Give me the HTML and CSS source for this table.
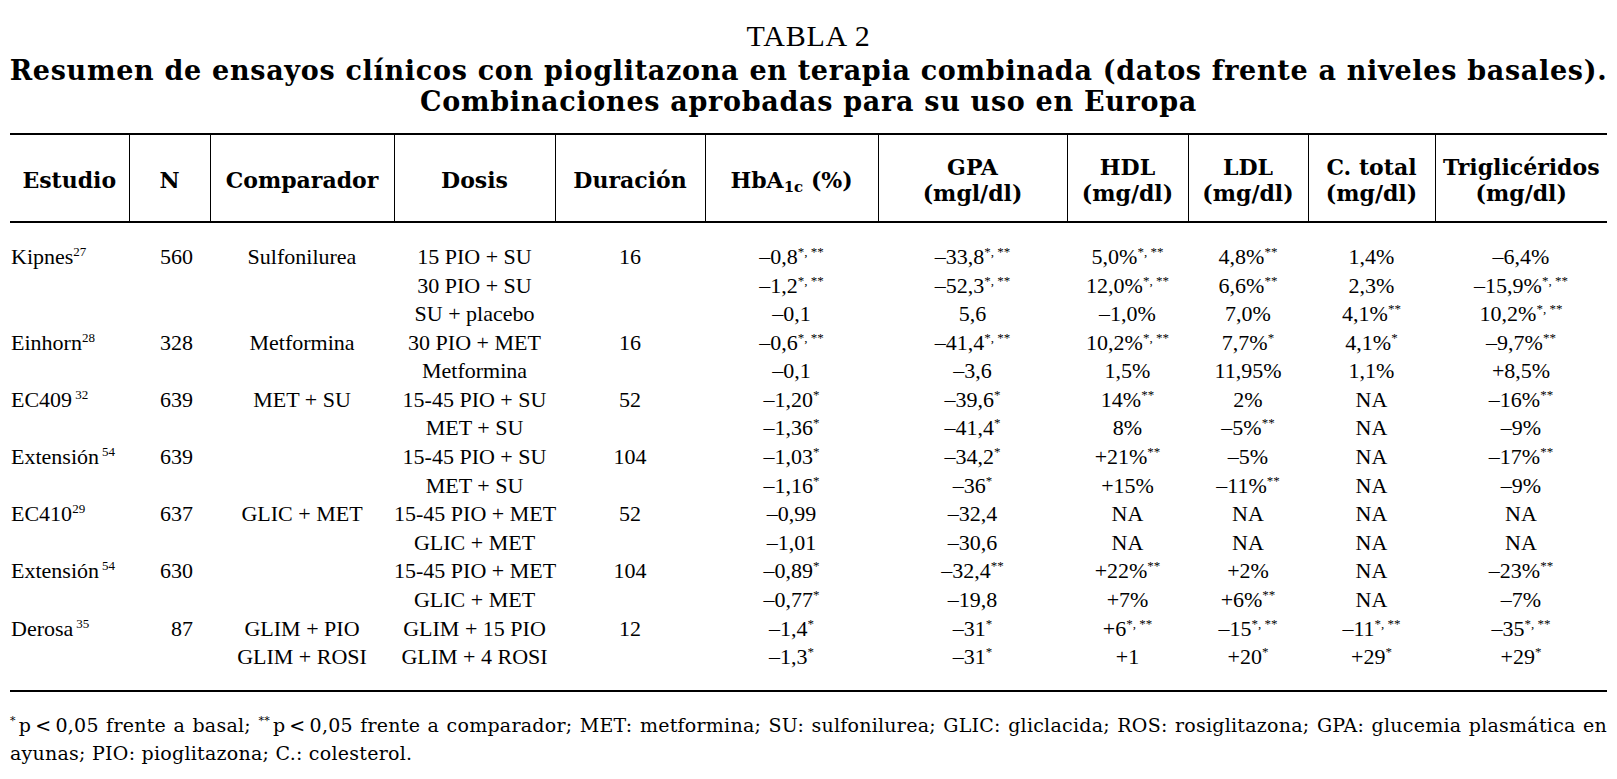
FILE: index.html
```html
<!DOCTYPE html>
<html lang="es">
<head>
<meta charset="utf-8">
<title>Tabla 2</title>
<link rel="stylesheet" href="styles.css">
</head>
<body>
<div class="page">
  <div class="caption">
    <div class="label">TABLA 2</div>
    <h1 class="title"><span class="t1">Resumen de ensayos clínicos con pioglitazona en terapia combinada (datos frente a niveles basales).</span><span class="t2">Combinaciones aprobadas para su uso en Europa</span></h1>
  </div>
  <table class="grid">
    <colgroup>
      <col class="c-est"><col class="c-n"><col class="c-comp"><col class="c-dos"><col class="c-dur"><col class="c-hba"><col class="c-gpa"><col class="c-hdl"><col class="c-ldl"><col class="c-ct"><col class="c-tg">
    </colgroup>
    <thead>
      <tr>
        <th><div class="th-in">Estudio</div></th>
        <th><div class="th-in">N</div></th>
        <th><div class="th-in">Comparador</div></th>
        <th><div class="th-in">Dosis</div></th>
        <th><div class="th-in">Duración</div></th>
        <th><div class="th-in">HbA<sub>1c</sub> (%)</div></th>
        <th><div class="th-in">GPA<br>(mgl/dl)</div></th>
        <th><div class="th-in">HDL<br>(mg/dl)</div></th>
        <th><div class="th-in">LDL<br>(mg/dl)</div></th>
        <th><div class="th-in">C. total<br>(mg/dl)</div></th>
        <th><div class="th-in">Triglicéridos<br>(mg/dl)</div></th>
      </tr>
    </thead>
    <tbody>
      <tr><td class="est">Kipnes<sup>27</sup></td><td class="n">560</td><td>Sulfonilurea</td><td>15 PIO + SU</td><td>16</td><td>–0,8<sup>*, **</sup></td><td>–33,8<sup>*, **</sup></td><td>5,0%<sup>*, **</sup></td><td>4,8%<sup>**</sup></td><td>1,4%</td><td>–6,4%</td></tr>
      <tr><td class="est"></td><td class="n"></td><td></td><td>30 PIO + SU</td><td></td><td>–1,2<sup>*, **</sup></td><td>–52,3<sup>*, **</sup></td><td>12,0%<sup>*, **</sup></td><td>6,6%<sup>**</sup></td><td>2,3%</td><td>–15,9%<sup>*, **</sup></td></tr>
      <tr><td class="est"></td><td class="n"></td><td></td><td>SU + placebo</td><td></td><td>–0,1</td><td>5,6</td><td>–1,0%</td><td>7,0%</td><td>4,1%<sup>**</sup></td><td>10,2%<sup>*, **</sup></td></tr>
      <tr><td class="est">Einhorn<sup>28</sup></td><td class="n">328</td><td>Metformina</td><td>30 PIO + MET</td><td>16</td><td>–0,6<sup>*, **</sup></td><td>–41,4<sup>*, **</sup></td><td>10,2%<sup>*, **</sup></td><td>7,7%<sup>*</sup></td><td>4,1%<sup>*</sup></td><td>–9,7%<sup>**</sup></td></tr>
      <tr><td class="est"></td><td class="n"></td><td></td><td>Metformina</td><td></td><td>–0,1</td><td>–3,6</td><td>1,5%</td><td>11,95%</td><td>1,1%</td><td>+8,5%</td></tr>
      <tr><td class="est">EC409<sup class="gap">32</sup></td><td class="n">639</td><td>MET + SU</td><td>15-45 PIO + SU</td><td>52</td><td>–1,20<sup>*</sup></td><td>–39,6<sup>*</sup></td><td>14%<sup>**</sup></td><td>2%</td><td>NA</td><td>–16%<sup>**</sup></td></tr>
      <tr><td class="est"></td><td class="n"></td><td></td><td>MET + SU</td><td></td><td>–1,36<sup>*</sup></td><td>–41,4<sup>*</sup></td><td>8%</td><td>–5%<sup>**</sup></td><td>NA</td><td>–9%</td></tr>
      <tr><td class="est">Extensión<sup class="gap">54</sup></td><td class="n">639</td><td></td><td>15-45 PIO + SU</td><td>104</td><td>–1,03<sup>*</sup></td><td>–34,2<sup>*</sup></td><td>+21%<sup>**</sup></td><td>–5%</td><td>NA</td><td>–17%<sup>**</sup></td></tr>
      <tr><td class="est"></td><td class="n"></td><td></td><td>MET + SU</td><td></td><td>–1,16<sup>*</sup></td><td>–36<sup>*</sup></td><td>+15%</td><td>–11%<sup>**</sup></td><td>NA</td><td>–9%</td></tr>
      <tr><td class="est">EC410<sup>29</sup></td><td class="n">637</td><td>GLIC + MET</td><td>15-45 PIO + MET</td><td>52</td><td>–0,99</td><td>–32,4</td><td>NA</td><td>NA</td><td>NA</td><td>NA</td></tr>
      <tr><td class="est"></td><td class="n"></td><td></td><td>GLIC + MET</td><td></td><td>–1,01</td><td>–30,6</td><td>NA</td><td>NA</td><td>NA</td><td>NA</td></tr>
      <tr><td class="est">Extensión<sup class="gap">54</sup></td><td class="n">630</td><td></td><td>15-45 PIO + MET</td><td>104</td><td>–0,89<sup>*</sup></td><td>–32,4<sup>**</sup></td><td>+22%<sup>**</sup></td><td>+2%</td><td>NA</td><td>–23%<sup>**</sup></td></tr>
      <tr><td class="est"></td><td class="n"></td><td></td><td>GLIC + MET</td><td></td><td>–0,77<sup>*</sup></td><td>–19,8</td><td>+7%</td><td>+6%<sup>**</sup></td><td>NA</td><td>–7%</td></tr>
      <tr><td class="est">Derosa<sup class="gap">35</sup></td><td class="n">87</td><td>GLIM + PIO</td><td>GLIM + 15 PIO</td><td>12</td><td>–1,4<sup>*</sup></td><td>–31<sup>*</sup></td><td>+6<sup>*, **</sup></td><td>–15<sup>*, **</sup></td><td>–11<sup>*, **</sup></td><td>–35<sup>*, **</sup></td></tr>
      <tr><td class="est"></td><td class="n"></td><td>GLIM + ROSI</td><td>GLIM + 4 ROSI</td><td></td><td>–1,3<sup>*</sup></td><td>–31<sup>*</sup></td><td>+1</td><td>+20<sup>*</sup></td><td>+29<sup>*</sup></td><td>+29<sup>*</sup></td></tr>
    </tbody>
  </table>
  <div class="notes">
    <p class="note-line first"><sup>*</sup>p&thinsp;&lt;&thinsp;0,05 frente a basal; <sup>**</sup>p&thinsp;&lt;&thinsp;0,05 frente a comparador; MET: metformina; SU: sulfonilurea; GLIC: gliclacida; ROS: rosiglitazona; GPA: glucemia plasmática en</p>
    <p class="note-line">ayunas; PIO: pioglitazona; C.: colesterol.</p>
  </div>
</div>
</body>
</html>
```
FILE: styles.css
```css
html, body {
  margin: 0;
  padding: 0;
  background: #ffffff;
  color: #000000;
}

.page {
  padding: 20px 10px 0 10px;
  width: 1597px;
}

.caption {
  display: flex;
  flex-direction: column;
  align-items: center;
  gap: 3px;
}

.label {
  font-family: "Liberation Serif", serif;
  font-size: 30px;
  line-height: 32px;
  letter-spacing: 0.8px;
  font-weight: normal;
}

.title {
  margin: 0;
  font-family: "DejaVu Serif", serif;
  font-weight: bold;
  font-size: 27px;
  line-height: 31px;
  letter-spacing: 0.7px;
  text-align: center;
  display: flex;
  flex-direction: column;
  align-items: center;
  white-space: nowrap;
}

.grid {
  margin-top: 16px;
  width: 1597px;
  table-layout: fixed;
  border-collapse: collapse;
  border-bottom: 2px solid #000;
}

.c-est { width: 119px; }
.c-n { width: 81px; }
.c-comp { width: 184px; }
.c-dos { width: 161px; }
.c-dur { width: 150px; }
.c-hba { width: 173px; }
.c-gpa { width: 189px; }
.c-hdl { width: 121px; }
.c-ldl { width: 120px; }
.c-ct { width: 127px; }
.c-tg { width: 172px; }

.grid th {
  font-family: "DejaVu Serif", serif;
  font-weight: bold;
  font-size: 22px;
  line-height: 26px;
  height: 86px;
  padding: 0;
  text-align: center;
  vertical-align: middle;
  border-top: 2px solid #000;
  border-bottom: 2px solid #000;
  border-left: 1px solid #000;
  white-space: nowrap;
}

.grid th:first-child {
  border-left: none;
}

.th-in {
  padding-top: 4px;
}

.grid th sub {
  font-size: 15px;
  line-height: 0;
  vertical-align: -4px;
}

.grid td {
  font-family: "Liberation Serif", serif;
  font-size: 22px;
  line-height: 28.58px;
  padding: 0;
  text-align: center;
  white-space: nowrap;
  vertical-align: middle;
}

.grid tbody tr:first-child td {
  padding-top: 20px;
}

.grid tbody tr:last-child td {
  padding-bottom: 18px;
}

.grid td.est {
  text-align: left;
  padding-left: 1px;
}

.grid td.n {
  text-align: right;
  padding-right: 17px;
}

.grid sup {
  font-size: 13px;
  line-height: 0;
  vertical-align: 8px;
}

.grid sup.gap {
  margin-left: 3px;
}

.notes {
  margin-top: 19px;
  display: flex;
  flex-direction: column;
}

.note-line {
  margin: 0;
  font-family: "DejaVu Serif", serif;
  font-size: 19px;
  line-height: 28px;
  letter-spacing: 0.25px;
}

.note-line.first {
  text-align: justify;
  text-align-last: justify;
}

.note-line sup {
  font-size: 11px;
  line-height: 0;
  vertical-align: 8px;
  margin-right: 3px;
}
```
